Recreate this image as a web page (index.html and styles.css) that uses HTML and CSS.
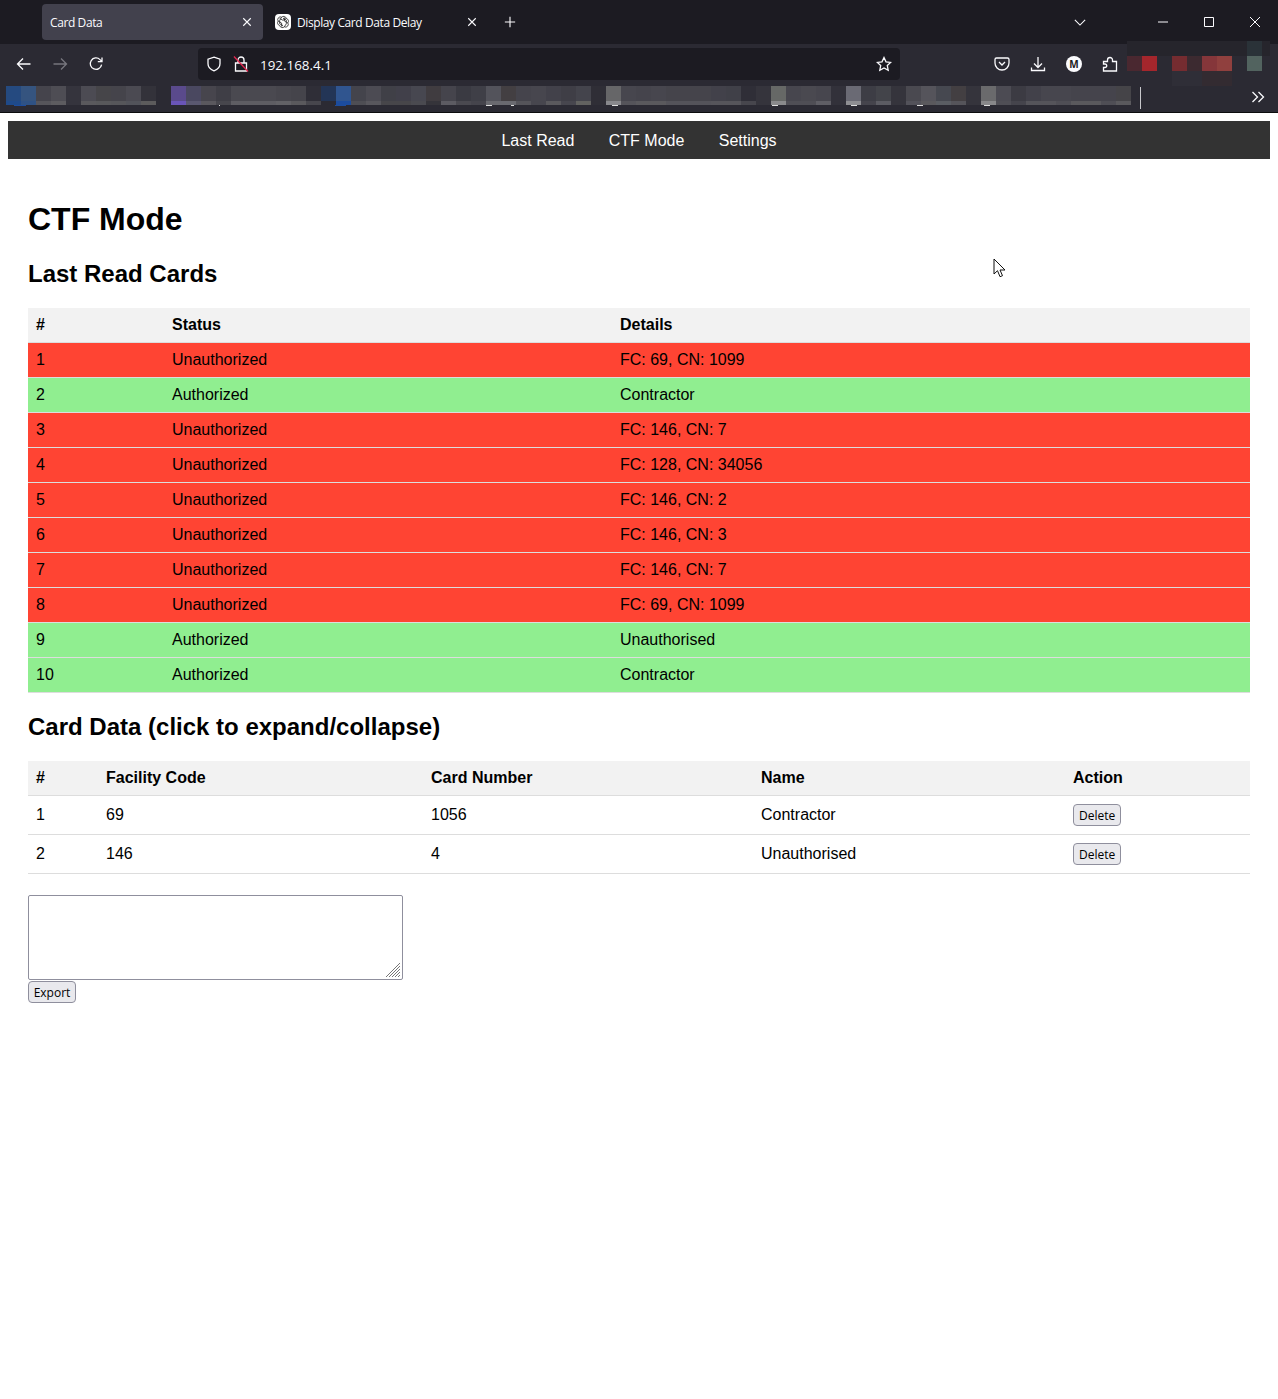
FILE: index.html
```html
<!DOCTYPE html>
<html lang="en">
<head>
    <meta charset="UTF-8">
    <meta name="viewport" content="width=device-width, initial-scale=1.0">
    <title>Card Data</title>
    <link rel="stylesheet" href="styles.css">
</head>
<body>
    <div class="browser">
        <div class="tabbar">
            <div class="tab tab-active">
                <span class="tab-title">Card Data</span>
                <svg class="icon-sm" viewBox="0 0 12 12"><path d="M1.5 1.5l9 9M10.5 1.5l-9 9"/></svg>
            </div>
            <div class="tab">
                <span class="favicon">
                    <svg viewBox="0 0 16 16"><path d="M6.7 3.2a2.7 2.7 0 0 1 4.6 1.3 2.7 2.7 0 0 1 1.5 4.4 2.7 2.7 0 0 1-3.5 3.9 2.7 2.7 0 0 1-4.6-1.3 2.7 2.7 0 0 1-1.5-4.4 2.7 2.7 0 0 1 3.5-3.9zM6.7 3.2L4.7 6.2v3.6l3.3 1.9M9.3 12.8l2-3V6.2L8 4.3M11.3 4.5L8 6.3 4.7 4.6M3.2 7.1l3.4 2 .1 3.6M12.8 8.9L9.4 7l-.1-3.7"/></svg>
                </span>
                <span class="tab-title">Display Card Data Delay</span>
                <svg class="icon-sm" viewBox="0 0 12 12"><path d="M1.5 1.5l9 9M10.5 1.5l-9 9"/></svg>
            </div>
            <svg class="new-tab" viewBox="0 0 14 14"><path d="M7 1v12M1 7h12"/></svg>
            <div class="tabbar-right">
                <svg class="tab-list" viewBox="0 0 14 8"><path d="M1 1l6 6 6-6"/></svg>
                <svg class="win-btn" viewBox="0 0 10 10"><path d="M0 5h10"/></svg>
                <svg class="win-btn" viewBox="0 0 10 10"><path d="M.5 .5h9v9h-9z"/></svg>
                <svg class="win-btn" viewBox="0 0 10 10"><path d="M0 0l10 10M10 0L0 10"/></svg>
            </div>
        </div>

        <div class="toolbar">
            <div class="nav-buttons">
                <svg class="tool" viewBox="0 0 16 16"><path d="M14.5 8h-13M7 2.5L1.5 8 7 13.5"/></svg>
                <svg class="tool tool-off" viewBox="0 0 16 16"><path d="M1.5 8h13M9 2.5L14.5 8 9 13.5"/></svg>
                <svg class="tool" viewBox="0 0 16 16"><path d="M13.6 8.6A5.7 5.7 0 1 1 12 3.6L14 5.6M14 1.5v4.2H9.8"/></svg>
            </div>
            <div class="urlbar">
                <svg class="tool" viewBox="0 0 16 16"><path d="M8 1.2l6 2v4.5c0 3.4-2.4 5.8-6 7.1-3.6-1.300-6-3.700-6-7.100V3.200z"/></svg>
                <svg class="tool lock" viewBox="0 0 16 16">
                    <path d="M2.500 7h11v8h-11zM5 7V4a3 3 0 0 1 6 0v3"/>
                    <path class="lock-slash" d="M1 .5l14 15"/>
                </svg>
                <span class="url">192.168.4.1</span>
                <svg class="tool star" viewBox="0 0 16 16"><path d="M8 1.500l2 4.300 4.700.6-3.400 3.200.9 4.700L8 12l-4.200 2.300.9-4.700L1.300 6.400 6 5.800z"/></svg>
            </div>
            <div class="toolbar-right">
                <svg class="tool" viewBox="0 0 16 16"><path d="M2.500 2h11A1.500 1.500 0 0 1 15 3.500V7a7 7 0 0 1-14 0V3.500A1.500 1.500 0 0 1 2.500 2zM5 6l3 3 3-3"/></svg>
                <svg class="tool" viewBox="0 0 16 16"><path d="M8 1v10M4 7.500L8 11.500l4-4M1.500 11.500v3h13v-3"/></svg>
                <span class="account">M</span>
                <svg class="tool" viewBox="0 0 16 16"><path d="M1.500 5.500H5.500V4a2.500 2.500 0 0 1 5 0v1.500h4V15H1.500v-3.500H3a1.750 1.750 0 0 0 0-3.500H1.500z"/></svg>
            </div>
        </div>

        <div class="bookmarks">
            <div class="mosaic" id="mosaic"></div>
            <div class="bookmarks-sep"></div>
            <svg class="more" viewBox="0 0 14 12"><path d="M1.500 1l5 5-5 5M7.500 1l5 5-5 5"/></svg>
        </div>

        <div class="addons" id="addons"></div>
    </div>

    <div class="page">
        <nav class="topnav">
            <a href="#">Last Read</a>
            <a href="#">CTF Mode</a>
            <a href="#">Settings</a>
        </nav>

        <div class="content">
            <h1>CTF Mode</h1>

            <h2>Last Read Cards</h2>
            <table class="reads">
                <thead>
                    <tr><th>#</th><th>Status</th><th>Details</th></tr>
                </thead>
                <tbody>
                    <tr class="denied"><td>1</td><td>Unauthorized</td><td>FC: 69, CN: 1099</td></tr>
                    <tr class="allowed"><td>2</td><td>Authorized</td><td>Contractor</td></tr>
                    <tr class="denied"><td>3</td><td>Unauthorized</td><td>FC: 146, CN: 7</td></tr>
                    <tr class="denied"><td>4</td><td>Unauthorized</td><td>FC: 128, CN: 34056</td></tr>
                    <tr class="denied"><td>5</td><td>Unauthorized</td><td>FC: 146, CN: 2</td></tr>
                    <tr class="denied"><td>6</td><td>Unauthorized</td><td>FC: 146, CN: 3</td></tr>
                    <tr class="denied"><td>7</td><td>Unauthorized</td><td>FC: 146, CN: 7</td></tr>
                    <tr class="denied"><td>8</td><td>Unauthorized</td><td>FC: 69, CN: 1099</td></tr>
                    <tr class="allowed"><td>9</td><td>Authorized</td><td>Unauthorised</td></tr>
                    <tr class="allowed"><td>10</td><td>Authorized</td><td>Contractor</td></tr>
                </tbody>
            </table>

            <h2>Card Data (click to expand/collapse)</h2>
            <table class="cards">
                <thead>
                    <tr><th>#</th><th>Facility Code</th><th>Card Number</th><th>Name</th><th>Action</th></tr>
                </thead>
                <tbody>
                    <tr><td>1</td><td>69</td><td>1056</td><td>Contractor</td><td><button class="btn">Delete</button></td></tr>
                    <tr><td>2</td><td>146</td><td>4</td><td>Unauthorised</td><td><button class="btn">Delete</button></td></tr>
                </tbody>
            </table>

            <div class="export-wrap">
                <textarea class="export-box"></textarea>
                <svg class="resizer" viewBox="0 0 14 14"><path d="M0 14L14 0M3 14L14 3M6 14l8-8M9 14l5-5M12 14l2-2"/></svg>
            </div>
            <button class="btn btn-export">Export</button>
        </div>

        <svg class="cursor" viewBox="0 0 13 20"><path d="M1 1v15l3.500-3.300 2.500 6 2.500-1-2.500-5.700H12z"/></svg>
    </div>

    <script src="script.js"></script>
</body>
</html>
```

FILE: styles.css
```css
* {
    box-sizing: border-box;
}
body {
    margin: 0;
    background-color: white;
    color: black;
    font-family: 'Liberation Sans', Arial, sans-serif;
    min-height: 1399px;
}
svg {
    fill: none;
    stroke: #fbfbfe;
    stroke-width: 1.3;
    flex: none;
}

/* browser chrome */
.browser {
    position: relative;
    font-family: 'Open Sans', 'Noto Sans', sans-serif;
    color: #fbfbfe;
}
.tabbar {
    height: 44px;
    background-color: #1c1b22;
    display: flex;
    align-items: center;
    padding-left: 42px;
}
.tab {
    width: 221px;
    height: 36px;
    padding: 0 7px 0 12px;
    display: flex;
    align-items: center;
    border-radius: 4px;
    font-size: 12px;
}
.tab-active {
    background-color: #42414d;
    padding: 0 11px 0 8px;
}
.tab-title {
    flex: 1;
    white-space: nowrap;
    letter-spacing: -0.4px;
}
.icon-sm {
    width: 10px;
    height: 10px;
}
.favicon {
    width: 16px;
    height: 16px;
    background-color: white;
    border-radius: 4px;
    margin-right: 6px;
    display: flex;
}
.favicon svg {
    stroke: #222;
    stroke-width: 0.8;
    width: 16px;
    height: 16px;
}
.new-tab {
    width: 12px;
    height: 12px;
    margin-left: 20px;
}
.tabbar-right {
    margin-left: auto;
    display: flex;
    align-items: center;
    padding-right: 18px;
}
.tab-list {
    width: 12px;
    height: 7px;
    margin-right: 36px;
}
.win-btn {
    width: 10px;
    height: 10px;
    margin-left: 36px;
    stroke-width: 1;
}
.toolbar {
    height: 39px;
    background-color: #2b2a33;
    display: flex;
    align-items: center;
    padding-left: 16px;
}
.nav-buttons {
    display: flex;
    gap: 20px;
    width: 182px;
}
.tool {
    width: 16px;
    height: 16px;
}
.tool-off {
    stroke: #77767e;
}
.urlbar {
    width: 702px;
    height: 32px;
    background-color: #1c1b22;
    border-radius: 4px;
    display: flex;
    align-items: center;
    padding: 0 8px;
    gap: 11px;
}
.lock-slash {
    stroke: #e22850;
}
.url {
    flex: 1;
    font-size: 13.4px;
    margin: 2px 0 0;
}
.toolbar-right {
    display: flex;
    align-items: center;
    gap: 20px;
    margin-left: 94px;
}
.account {
    width: 16px;
    height: 16px;
    border-radius: 50%;
    background-color: #fbfbfe;
    color: #1c1b22;
    font-size: 10px;
    font-weight: 700;
    line-height: 16px;
    text-align: center;
}
.bookmarks {
    position: relative;
    height: 30px;
    background-color: #2b2a33;
    border-bottom: 1px solid #0c0c0d;
    padding: 3px 0 0 6px;
    display: flex;
}
.mosaic {
    position: relative;
    width: 1125px;
    display: grid;
    grid-template-columns: repeat(75, 15px);
    grid-template-rows: 15px 4px;
    height: 19px;
}
/* bits of the bookmark icons showing below the blur */
.mosaic::after {
    content: '';
    position: absolute;
    left: 0;
    top: 19px;
    width: 100%;
    height: 1px;
    background:
        linear-gradient(#1c4c9e, #1c4c9e) 8px 0 / 12px 1px no-repeat,
        linear-gradient(#1c4c9e, #1c4c9e) 329px 0 / 11px 1px no-repeat,
        linear-gradient(#ddd, #ddd) 213px 0 / 1px 1px no-repeat,
        linear-gradient(#ddd, #ddd) 480px 0 / 6px 1px no-repeat,
        linear-gradient(#ddd, #ddd) 505px 0 / 3px 1px no-repeat,
        linear-gradient(#ddd, #ddd) 606px 0 / 6px 1px no-repeat,
        linear-gradient(#ddd, #ddd) 766px 0 / 6px 1px no-repeat,
        linear-gradient(#ddd, #ddd) 845px 0 / 6px 1px no-repeat,
        linear-gradient(#ddd, #ddd) 911px 0 / 6px 1px no-repeat,
        linear-gradient(#ddd, #ddd) 978px 0 / 6px 1px no-repeat;
}
.bookmarks-sep {
    width: 1px;
    height: 22px;
    margin: 1px 0 0 9px;
    background-color: #c8c8cc;
}
.more {
    width: 14px;
    height: 12px;
    margin: 5px 0 0 110px;
}
.addons {
    position: absolute;
    left: 1127px;
    top: 41px;
    display: grid;
    grid-template-columns: repeat(9, 15px) 8px;
    grid-template-rows: 15px 15px 15px;
}

/* page */
.page {
    position: relative;
    padding: 8px;
}
.topnav {
    background-color: #333;
    height: 38px;
    padding-top: 1px;
    display: flex;
    justify-content: center;
    align-items: center;
    gap: 34.4px;
}
.topnav a {
    color: white;
    font-size: 16px;
    text-decoration: none;
}
.content {
    padding: 42px 20px 0;
}
h1 {
    font-size: 32px;
    margin: 0 0 22px;
}
h2 {
    font-size: 24px;
    margin: 20px 0;
}
table {
    width: 100%;
    border-collapse: collapse;
    table-layout: fixed;
    font-size: 16px;
}
th, td {
    padding: 8px;
    text-align: left;
    border-bottom: 1px solid #ddd;
}
th {
    background-color: #f2f2f2;
}
.reads th:nth-child(1) { width: 136px; }
.reads th:nth-child(2) { width: 448px; }
.cards th:nth-child(1) { width: 70px; }
.cards th:nth-child(2) { width: 325px; }
.cards th:nth-child(3) { width: 330px; }
.cards th:nth-child(4) { width: 312px; }
.denied {
    background-color: #ff4433;
}
.allowed {
    background-color: #90ee90;
}
.btn {
    display: block;
    height: 22px;
    padding: 0 5px;
    background-color: #e9e9ed;
    border: 1px solid #8f8f9d;
    border-radius: 4px;
    color: black;
    font-family: 'Open Sans', 'Noto Sans', sans-serif;
    font-size: 12px;
}
.btn-export {
    width: 48px;
    padding: 0;
}
.export-wrap {
    position: relative;
    width: 375px;
    margin: 21px 0 1px;
}
.export-box {
    display: block;
    width: 375px;
    height: 85px;
    border: 1px solid #8f8f9d;
    border-radius: 2px;
    background-color: white;
    resize: none;
}
.resizer {
    position: absolute;
    right: 3px;
    bottom: 3px;
    width: 14px;
    height: 14px;
    stroke: #777;
    stroke-width: 1;
}
.cursor {
    position: absolute;
    left: 993px;
    top: 145px;
    width: 13px;
    height: 20px;
    stroke: #111;
    stroke-width: 1;
    fill: white;
}
```

FILE: script.js
```js
// blurred out bookmark labels, [top, bottom] for each cell
const bg = '#2b2a33';
const cells = [
    ['#254a80', '#1f4a8a'], ['#35547f', '#2f5285'], ['#45444c', '#56555b'], ['#4e4d54', '#5d5c60'],
    ['#35343d', '#35343d'], ['#4c4b53', '#5a595d'], ['#464549', '#58585b'], ['#45444b', '#56565a'],
    ['#4b4a52', '#52535a'], ['#33323a', '#5c5b5c'], [bg, bg],
    ['#5a4a8c', '#6a55b8'], ['#4a4860', '#5a5870'], ['#47454d', '#5a585e'], ['#3f3e46', '#47464d'],
    ['#4a4950', '#5e5d63'], ['#4a4950', '#5e5d63'], ['#4a4950', '#5e5d63'], ['#47464d', '#626166'],
    ['#45444b', '#5a595d'], ['#2f2e37', '#47464d'],
    ['#233556', bg], ['#30558f', '#1c4c9e'], ['#44444c', '#4e4e54'], ['#4c4b53', '#58575d'],
    ['#404047', '#47464a'], ['#41404a', '#47464a'], ['#474750', '#4a4a50'], ['#403c40', '#35343a'],
    ['#45444c', '#5c5b62'], ['#3a3a42', '#4a4950'], ['#3f3f47', '#45444c'], ['#53535b', '#6a6a70'],
    ['#433f42', '#6a6a70'], ['#45444c', '#55545a'], ['#47464e', '#47464e'], ['#42414a', '#5a595d'],
    ['#3f3e46', '#47464e'], ['#44444c', '#626260'], ['#2f2e36', '#2f2e36'], ['#666668', '#88888c'],
    ['#47464e', '#55545a'], ['#45444c', '#5a595d'], ['#47464e', '#5a595d'], ['#45444b', '#54535a'],
    ['#45444b', '#54535a'], ['#45444b', '#54535a'], ['#42414a', '#56555b'], ['#404048', '#56555b'],
    ['#2f2e37', '#47464d'], ['#35343c', '#35343c'], ['#666866', '#8a8a8c'], ['#47464e', '#4f4e55'],
    ['#4a4950', '#4f4e55'], ['#47464e', '#5f5e65'], ['#32313a', '#32313a'], ['#6a6a74', '#8e8e92'],
    ['#3d3d45', '#45444c'], ['#43444a', '#5c5c63'], ['#35343c', '#35343c'], ['#4a4950', '#53525a'],
    ['#55545b', '#5a595d'], ['#464850', '#5a5d63'], ['#433f42', '#55545a'], ['#35343c', '#35343c'],
    ['#6a6a6c', '#88888a'], ['#4c4b53', '#4f4e55'], ['#3c3b43', '#45444c'], ['#42414a', '#55545a'],
    ['#47464e', '#55545a'], ['#47464e', '#4f4e55'], ['#45444c', '#5a595d'], ['#45444c', '#5a595d'],
    ['#45444c', '#4f4e55'], ['#454448', '#5a595d']
];

const mosaic = document.getElementById('mosaic');
[0, 1].forEach(row => {
    cells.forEach(cell => {
        const span = document.createElement('span');
        span.style.backgroundColor = cell[row];
        mosaic.appendChild(span);
    });
});

// blurred out extension icons
const addonCells = [
    '#26252c', '#26252c', '#26252c', '#26252c', '#26252c', '#26252c', '#26252c', '#26252c', '#2a3238', '#26252c',
    '#4a2830', '#a4262c', bg, '#752c30', '#3c2a30', '#85363a', '#90403e', bg, '#52635f', bg,
    bg, bg, bg, '#2f2e37', '#2f2e37', '#332b31', '#332b31', bg, bg, bg
];
const addons = document.getElementById('addons');
addonCells.forEach(color => {
    const span = document.createElement('span');
    span.style.backgroundColor = color;
    addons.appendChild(span);
});
```
